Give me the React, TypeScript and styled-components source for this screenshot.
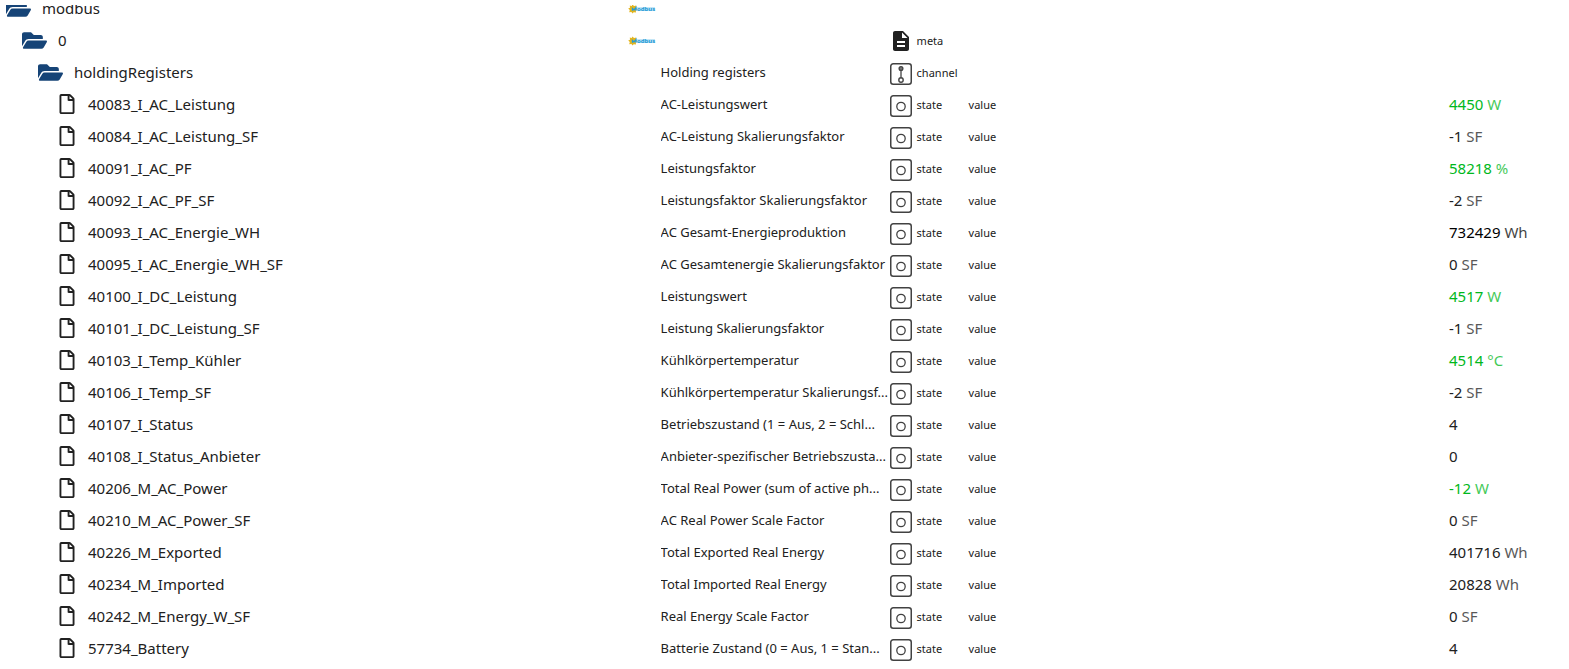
import React from 'react';
import styled, { createGlobalStyle } from 'styled-components';
import { FaFolderOpen, FaRegFile } from 'react-icons/fa';

const GlobalStyle = createGlobalStyle`
  * { box-sizing: border-box; }
  body {
    margin: 0;
    background: #fff;
    color: #212121;
    font-family: "Segoe UI", "Noto Sans", "Open Sans", sans-serif;
  }
`;

const Page = styled.main`
  padding-top: 5px;
`;

const Viewport = styled.div`
  overflow: hidden;
`;

/* The list is scrolled a little, so its first row is partly hidden. */
const Tree = styled.table`
  width: 100%;
  margin-top: -13px;
  table-layout: fixed;
  border-collapse: collapse;
`;

const NameCol = styled.col`width: 40%;`;
const LogoCol = styled.col`width: 33px;`;
const TitleCol = styled.col`width: 229px;`;
const TypeCol = styled.col`width: 79px;`;
const RoleCol = styled.col``;
const ValueCol = styled.col`width: 120px;`;

const Row = styled.tr`
  height: 32px;
`;

const Cell = styled.td`
  height: 32px;
  padding: 0;
  vertical-align: middle;
  white-space: nowrap;
`;

const TitleCell = styled(Cell)`
  overflow: hidden;
  text-overflow: ellipsis;
  font-size: 13px;
`;

const RoleCell = styled(Cell)`
  font-size: 11px;
`;

const Name = styled.div<{ $level: number; $leaf?: boolean }>`
  display: flex;
  align-items: center;
  gap: 11px;
  padding-left: ${p => (p.$leaf ? 57 : 6 + p.$level * 16)}px;
  font-size: 15px;
  line-height: 32px;
  svg { flex: none; }
`;

const Type = styled.div`
  display: flex;
  align-items: center;
  gap: 5px;
  font-size: 11px;
  svg { flex: none; }
`;

const Value = styled.div<{ $tone: Tone }>`
  font-size: 15px;
  color: ${p => ({ fresh: '#00b81c', strong: '#000', plain: '#212121' })[p.$tone]};
`;

const Unit = styled.span`
  opacity: 0.75;
`;

const Logo = styled.svg`
  display: block;
`;

const LogoText = styled.text`
  font: bold 6px "Noto Sans", sans-serif;
  fill: #1e9ad6;
`;

type Tone = 'fresh' | 'strong' | 'plain';
type State = [id: string, title: string, value: string, unit?: string, tone?: Tone];

const states: State[] = [
  ['40083_I_AC_Leistung', 'AC-Leistungswert', '4450', 'W', 'fresh'],
  ['40084_I_AC_Leistung_SF', 'AC-Leistung Skalierungsfaktor', '-1', 'SF'],
  ['40091_I_AC_PF', 'Leistungsfaktor', '58218', '%', 'fresh'],
  ['40092_I_AC_PF_SF', 'Leistungsfaktor Skalierungsfaktor', '-2', 'SF'],
  ['40093_I_AC_Energie_WH', 'AC Gesamt-Energieproduktion', '732429', 'Wh', 'strong'],
  ['40095_I_AC_Energie_WH_SF', 'AC Gesamtenergie Skalierungsfaktor', '0', 'SF'],
  ['40100_I_DC_Leistung', 'Leistungswert', '4517', 'W', 'fresh'],
  ['40101_I_DC_Leistung_SF', 'Leistung Skalierungsfaktor', '-1', 'SF'],
  ['40103_I_Temp_Kühler', 'Kühlkörpertemperatur', '4514', '°C', 'fresh'],
  ['40106_I_Temp_SF', 'Kühlkörpertemperatur Skalierungsf...', '-2', 'SF'],
  ['40107_I_Status', 'Betriebszustand (1 = Aus, 2 = Schl...', '4'],
  ['40108_I_Status_Anbieter', 'Anbieter-spezifischer Betriebszusta...', '0'],
  ['40206_M_AC_Power', 'Total Real Power (sum of active ph...', '-12', 'W', 'fresh'],
  ['40210_M_AC_Power_SF', 'AC Real Power Scale Factor', '0', 'SF'],
  ['40226_M_Exported', 'Total Exported Real Energy', '401716', 'Wh'],
  ['40234_M_Imported', 'Total Imported Real Energy', '20828', 'Wh'],
  ['40242_M_Energy_W_SF', 'Real Energy Scale Factor', '0', 'SF'],
  ['57734_Battery', 'Batterie Zustand (0 = Aus, 1 = Stan...', '4'],
];

const ModbusLogo = () => (
  <Logo width="28" height="12" viewBox="0 -2 28 12" role="img" aria-label="Modbus">
    <path d="M4.5 0.5 6 2 8.3 1.5 7.8 3.7 9.3 5 7.8 6.3 8 8.6 5.8 8.2 4.3 9.6 3.5 8 1.2 8.2 1.8 6 0.2 4.5 2 3.7 1.8 1.4 3.7 2Z" fill="#e3b51e" />
    <path d="M4.500 6.800V4.500L6 5.900 8 3.500V6.800" fill="none" stroke="#239bd5" strokeWidth="1.3" />
    <path d="M9 5H27" stroke="#c4e6f6" strokeWidth="4" />
    <LogoText x="9" y="7">odbus</LogoText>
  </Logo>
);

const MetaIcon = () => (
  <svg width="22" height="26" viewBox="1 -2 22 26" fill="#212121">
    <path d="M14 2H6c-1.100 0-1.990.9-1.990 2L4 20c0 1.100.89 2 1.990 2H18c1.100 0 2-.9 2-2V8l-6-6zm2 16H8v-2h8v2zm0-4H8v-2h8v2zm-3-5V3.500L18.500 9H13z" />
  </svg>
);

const StateIcon = () => (
  <svg width="22" height="26" viewBox="0 -3 22 26" fill="none" stroke="#424242">
    <rect x="0.750" y="1.750" width="20.500" height="20.500" rx="2.500" strokeWidth="1.500" />
    <circle cx="11" cy="12.500" r="4.200" strokeWidth="1.300" />
  </svg>
);

const ChannelIcon = () => (
  <svg width="22" height="26" viewBox="0 -3 22 26" fill="none" stroke="#424242">
    <rect x="0.750" y="1.750" width="20.500" height="20.500" rx="2.500" strokeWidth="1.500" />
    <circle cx="11" cy="6.500" r="1.900" strokeWidth="1.300" fill="#777" />
    <path d="M11 8V15.500" strokeWidth="1.300" />
    <circle cx="11" cy="18" r="2.200" strokeWidth="1.400" />
  </svg>
);

const Folder = ({ level, label }: { level: number; label: string }) => (
  <Name $level={level}>
    <FaFolderOpen size={25} color="#164477" />
    {label}
  </Name>
);

export default function App() {
  return (
    <>
      <GlobalStyle />
      <Page>
        <Viewport>
          <Tree>
            <colgroup>
              <NameCol />
              <LogoCol />
              <TitleCol />
              <TypeCol />
              <RoleCol />
              <ValueCol />
            </colgroup>
            <tbody>
              <Row>
                <Cell><Folder level={0} label="modbus" /></Cell>
                <Cell><ModbusLogo /></Cell>
                <Cell colSpan={4} />
              </Row>
              <Row>
                <Cell><Folder level={1} label="0" /></Cell>
                <Cell><ModbusLogo /></Cell>
                <TitleCell />
                <Cell><Type><MetaIcon />meta</Type></Cell>
                <Cell colSpan={2} />
              </Row>
              <Row>
                <Cell><Folder level={2} label="holdingRegisters" /></Cell>
                <Cell />
                <TitleCell>Holding registers</TitleCell>
                <Cell><Type><ChannelIcon />channel</Type></Cell>
                <Cell colSpan={2} />
              </Row>
              {states.map(([id, title, value, unit, tone = 'plain']) => (
                <Row key={id}>
                  <Cell><Name $level={3} $leaf><FaRegFile size={20} />{id}</Name></Cell>
                  <Cell />
                  <TitleCell>{title}</TitleCell>
                  <Cell><Type><StateIcon />state</Type></Cell>
                  <RoleCell>value</RoleCell>
                  <Cell><Value $tone={tone}>{value}{unit && <Unit> {unit}</Unit>}</Value></Cell>
                </Row>
              ))}
            </tbody>
          </Tree>
        </Viewport>
      </Page>
    </>
  );
}
